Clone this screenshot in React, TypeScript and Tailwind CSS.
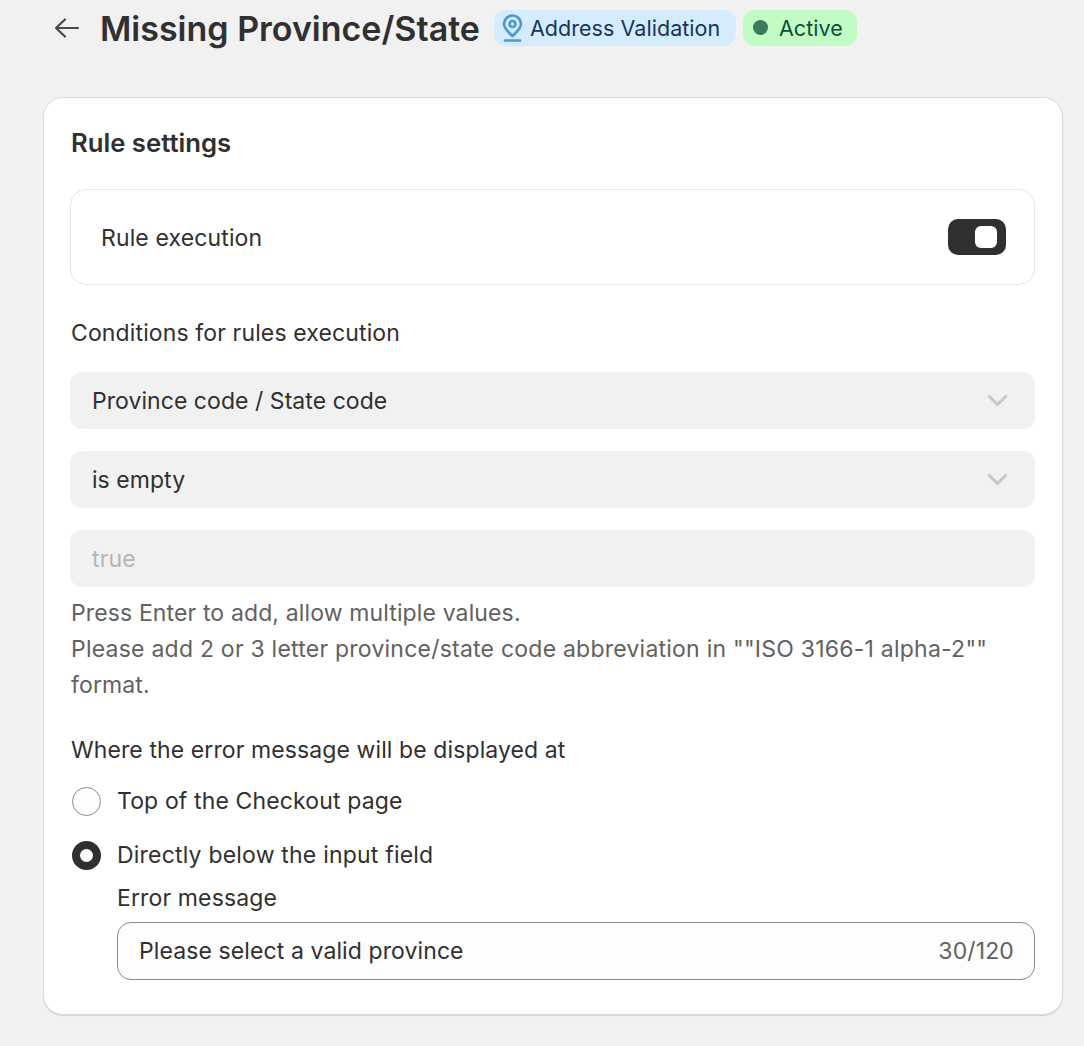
import { ChevronDown } from 'lucide-react';

const Select = ({ label }: { label: string }) => (
  <div className="flex h-[57px] items-center justify-between rounded-[12px] bg-[#f1f1f1] pl-[22px] pr-[21px]">
    <span className="pt-px tracking-[0.05px]">{label}</span>
    <ChevronDown className="h-[33px] w-[33px] text-[#c9c9c9]" strokeWidth={2.1} />
  </div>
);

const Badge = ({ className, children }: { className: string; children: React.ReactNode }) => (
  <div className={`mb-[2px] flex h-[36px] items-center rounded-[12px] text-[21.5px] tracking-[0.05px] ${className}`}>
    {children}
  </div>
);

const App = () => {
  return (
    <div className="h-[1046px] w-[1084px] overflow-hidden bg-[#f1f1f1] text-[23px] leading-[36px] tracking-[0.13px] text-[#303030] [font-family:Inter,sans-serif]">
      {/* Page header */}
      <div className="flex h-[56px] items-center pl-[53px] pt-[1px]">
        <svg width="28" height="28" viewBox="0 0 28 28" fill="none" stroke="#4a4a4a" strokeWidth="2.2" strokeLinecap="round" strokeLinejoin="round" className="mb-[2px]">
          <path d="M3 14h22M12 5.500 3 14l9 8.500" />
        </svg>
        <h1 className="ml-[19px] text-[34px] font-semibold tracking-normal text-[#303030]">Missing Province/State</h1>
        <Badge className="ml-[14px] w-[242px] bg-[#d5ebff] pl-[8px] text-[#13365a]">
          <svg width="21" height="28" viewBox="0 0 21 28" fill="none" stroke="#4a96d9" strokeWidth="2.6" strokeLinecap="round" strokeLinejoin="round">
            <path d="M10.500 22C6 17.500 2 14.500 2 10a8.500 8.500 0 0 1 17 0c0 4.500-4 7.500-8.500 12Z" />
            <circle cx="10.500" cy="10" r="3" />
            <path d="M3 26.500h15" />
          </svg>
          <span className="ml-[7px]">Address Validation</span>
        </Badge>
        <Badge className="ml-[7px] w-[114px] bg-[#c1fcc5] pl-[10px] text-[#0c4f35]">
          <span className="h-[15px] w-[15px] rounded-full bg-[#3b7a5c]" />
          <span className="ml-[11px]">Active</span>
        </Badge>
      </div>

      {/* Card */}
      <div className="ml-[43px] mt-[41px] h-[918px] w-[1020px] rounded-[20px] border border-[#dcdcdc] bg-white pl-[26px] pr-[27px] pt-[27px] shadow-[0_1px_1px_rgba(0,0,0,0.12)]">
        <h2 className="ml-px text-[25.7px] font-semibold tracking-normal">Rule settings</h2>

        <div className="mt-[28px] flex h-[96px] items-center justify-between rounded-[16px] border border-[#e6e6e6] pl-[30px] pr-[28px]">
          <span className="pt-px">Rule execution</span>
          <div className="flex h-[36px] w-[58px] items-center justify-end rounded-[10px] bg-[#303030] pr-[9px]">
            <div className="h-[22px] w-[22px] rounded-[6px] bg-white" />
          </div>
        </div>

        <p className="ml-px mt-[30px]">Conditions for rules execution</p>

        <div className="mt-[21px] flex flex-col gap-[22px]">
          <Select label="Province code / State code" />
          <Select label="is empty" />
          <div className="flex h-[57px] items-center rounded-[12px] bg-[#f1f1f1] pl-[22px] pt-px text-[#b5b5b5]">true</div>
        </div>

        <p className="ml-px mt-[8px] text-[#616161]">
          Press Enter to add, allow multiple values.
          <br />
          <span className="tracking-[0.23px]">Please add 2 or 3 letter province/state code abbreviation in ""ISO 3166-1 alpha-2""</span>
          <br />
          format.
        </p>

        <p className="ml-px mt-[29px] tracking-[0.1px]">Where the error message will be displayed at</p>

        <div className="mt-[15px] flex items-center gap-[16px] pl-[2px]">
          <span className="h-[29px] w-[29px] rounded-full border border-[#8a8a8a] bg-[#fdfdfd]" />
          <span>Top of the Checkout page</span>
        </div>
        <div className="mt-[18px] flex items-center gap-[16px] pl-[2px]">
          <span className="flex h-[29px] w-[29px] items-center justify-center rounded-full bg-[#303030]">
            <span className="h-[13px] w-[13px] rounded-full bg-white" />
          </span>
          <span className="tracking-[0.2px]">Directly below the input field</span>
        </div>

        <div className="ml-[47px] mt-[7px]">
          <p>Error message</p>
          <div className="mt-[6px] flex h-[58px] items-center justify-between rounded-[14px] border border-[#8a8a8a] bg-[#fdfdfd] pl-[21px] pr-[20px]">
            <span className="tracking-[0.1px]">Please select a valid province</span>
            <span className="text-[#616161]">30/120</span>
          </div>
        </div>
      </div>
    </div>
  );
};

export default App;
